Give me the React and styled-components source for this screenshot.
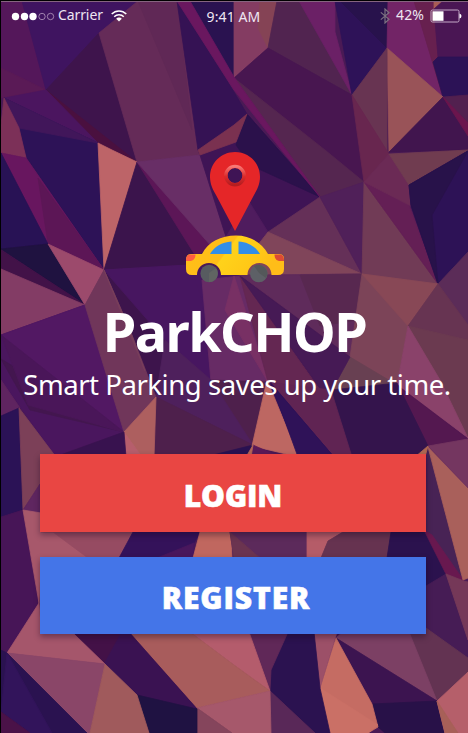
import React from 'react';
import styled, { createGlobalStyle } from 'styled-components';

const GlobalStyle = createGlobalStyle`
  *, *::before, *::after { box-sizing: border-box; }
  body { margin: 0; background: #000; }
`;

const Screen = styled.main`
  position: relative;
  isolation: isolate;
  display: flex;
  flex-direction: column;
  width: 468px;
  height: 733px;
  overflow: hidden;
  border-left: 1px solid #000;
  color: #fff;
  font-family: 'Noto Sans', 'Open Sans', sans-serif;
`;

const Backdrop = styled.svg`
  position: absolute;
  inset: 0 0 0 -1px;
  width: 468px;
  height: 733px;
  z-index: -1;
`;

const StatusBar = styled.header`
  display: grid;
  grid-template-columns: 1fr auto 1fr;
  align-items: center;
  height: 31px;
  padding: 0 6px 0 10px;
  border-top: 1px solid #000;
  box-shadow: inset 0 1px #85647f;
  font-size: 14px;
  line-height: 20px;
  color: #eee6f2;
`;

const StatusGroup = styled.div`
  display: flex;
  align-items: center;
  justify-content: ${(p) => (p.$end ? 'flex-end' : 'flex-start')};
`;

const StatusText = styled.span`
  font-size: ${(p) => p.$size || 14}px;
  letter-spacing: ${(p) => p.$track || 0}px;
  margin: ${(p) => p.$margin || 0};
`;

const Brand = styled.section`
  display: flex;
  flex-direction: column;
  align-items: center;
  padding-top: 118px;
`;

const Logo = styled.svg`
  display: block;
  width: 104px;
  height: 136px;
`;

const Title = styled.h1`
  margin: 12.500px 0 0;
  font-size: 54px;
  line-height: 66px;
  font-weight: 700;
  letter-spacing: ${(p) => p.$track}px;
  white-space: nowrap;
`;

const Tagline = styled.p`
  margin: 2px 0 0 5px;
  font-size: 27.5px;
  line-height: 38px;
  letter-spacing: ${(p) => p.$track}px;
  white-space: nowrap;
`;

const Actions = styled.nav`
  display: flex;
  flex-direction: column;
  gap: 25px;
  margin: 50.500px 42px 0 39px;
`;

const ActionButton = styled.button`
  height: 77.5px;
  padding: 6px 0 0 ${(p) => p.$shift || 0}px;
  border: 0;
  background: ${(p) => p.$color};
  box-shadow: 0 3px 6px rgba(20, 5, 30, 0.4);
  color: #fff;
  font-family: 'Open Sans', 'Noto Sans', sans-serif;
  font-size: 30px;
  line-height: 40px;
  font-weight: 800;
  letter-spacing: ${(p) => p.$track}px;
  -webkit-text-stroke: 0.6px #fff;
`;

const FACETS = [
  ['#54175a', '1,1 22,1 46,90 1,98'],
  ['#5a1a56', '1,68 46,90 1,98'],
  ['#3f1460', '22,1 138,1 99,33 46,90'],
  ['#3e144c', '99,33 46,90 98,143 137,162'],
  ['#4a103f', '46,90 98,143 137,162'],
  ['#652b58', '99,33 138,1 177,1 200,155 137,162'],
  ['#602856', '138,1 177,1 192,130'],
  ['#351254', '177,1 234,92 247,114 200,155 198,150'],
  ['#2a1250', '190,1 234,1 234,78'],
  ['#4b155f', '46,90 4,98 98,143'],
  ['#2d1257', '4,98 19,128 27,158 104,270 98,143'],
  ['#41165a', '4,98 98,143 19,128'],
  ['#7c3058', '1,125 4,98 19,128 26,158 1,153'],
  ['#68165f', '1,153 26,158 104,270 48,244'],
  ['#5c1656', '38,178 104,270 48,244'],
  ['#281255', '1,153 48,244 1,249'],
  ['#1f1240', '1,249 48,244 84,304'],
  ['#421248', '1,250 84,304 1,270'],
  ['#833c65', '1,269 85,305 1,335'],
  ['#9c4a6c', '48,244 104,270 85,305'],
  ['#bd6468', '98,143 112,150 137,162 104,270'],
  ['#3b144c', '137,162 104,270 190,265 195,255'],
  ['#5c1657', '137,162 195,255 212,247'],
  ['#682e66', '137,162 200,155 226,237 212,247'],
  ['#471660', '104,270 190,265 240,276 211,380 145,370'],
  ['#3d144c', '104,270 130,295 211,380 156,397 130,330'],
  ['#471660', '104,270 190,265 202,300 211,382 165,340'],
  ['#843c62', '234,1 277,1 268,48 234,78'],
  ['#854355', '260,1 277,1 268,48 258,28'],
  ['#512450', '277,1 299,1 352,95 268,48'],
  ['#6b2066', '299,1 335,1 335,32 352,95'],
  ['#2e1258', '335,1 388,1 387,48 352,95'],
  ['#28124c', '340,1 388,1 387,48'],
  ['#722466', '388,1 414,1 443,97 387,48'],
  ['#67204f', '414,1 434,1 438,57 433,62 443,97'],
  ['#a85d55', '434,1 443,1 434,9'],
  ['#4a1654', '443,1 468,1 468,57 438,57 434,9'],
  ['#2c1256', '438,57 468,57 468,95 443,97 433,62'],
  ['#995358', '387,48 443,97 389,152'],
  ['#683452', '387,48 387,152 352,95'],
  ['#481650', '268,48 352,95 364,182 320,197 234,78'],
  ['#552650', '234,78 325,150 364,182 320,197'],
  ['#68264f', '352,95 389,154 364,182'],
  ['#52204f', '443,97 468,95 468,135'],
  ['#41154e', '443,97 389,152 468,150 468,135'],
  ['#6b154d', '443,97 468,123 468,136'],
  ['#3f1455', '200,155 247,114 320,197 268,232 226,237'],
  ['#2b114b', '247,114 320,197 250,165 236,145'],
  ['#6a175f', '177,1 190,1 234,77 320,197 283,152 234,90'],
  ['#7a3150', '234,125 247,114 236,142 200,155 198,150'],
  ['#4f1c5e', '226,237 248,200 268,232 250,255'],
  ['#653058', '268,232 320,197 362,274'],
  ['#502059', '320,197 364,182 362,274'],
  ['#713b56', '364,182 438,284 362,274'],
  ['#641f55', '364,182 409,205 438,284'],
  ['#6b2a55', '364,182 389,154 409,185 411,206'],
  ['#703c50', '389,154 468,150 409,185'],
  ['#2d1256', '409,185 468,151 468,252 438,284 411,205'],
  ['#28124a', '409,185 468,151 432,215 438,284 411,205'],
  ['#5b2c58', '438,284 468,252 468,325 408,326'],
  ['#80455a', '268,232 362,274 240,276 250,255'],
  ['#5f2b5b', '240,275 362,274 350,357'],
  ['#582850', '300,275 362,274 358,320 320,326'],
  ['#7c4458', '362,274 438,284 408,326 397,385 331,392 350,357'],
  ['#884856', '362,274 438,284 408,326'],
  ['#684052', '350,357 397,385 331,392'],
  ['#673452', '408,326 438,284 468,325 468,370'],
  ['#6b3a50', '408,326 468,340 468,438'],
  ['#8a426a', '408,326 440,380 468,438 397,385'],
  ['#541850', '397,385 468,439 428,446'],
  ['#34144c', '331,390 397,383 428,446 420,457 352,457'],
  ['#672b65', '202,280 240,276 268,382 211,382'],
  ['#783064', '234,276 255,340 268,382 225,310'],
  ['#642752', '240,276 320,390 268,382'],
  ['#461a55', '240,276 350,357 331,392 320,388'],
  ['#4e204c', '156,397 211,380 268,382 253,445 240,457 154,457'],
  ['#4e205c', '156,397 165,340 211,380 253,445'],
  ['#4e204c', '156,397 253,445 240,457 154,457'],
  ['#291151', '205,457 253,445 247,457'],
  ['#602453', '268,382 331,390 352,457 334,457'],
  ['#2f1258', '270,382 334,457 298,457'],
  ['#bd6762', '267,380 299,457 252,446'],
  ['#2f1258', '272,385 334,457 298,457'],
  ['#5b1a58', '253,445 280,457 250,457'],
  ['#b46557', '253,445 251,457 246,457'],
  ['#4a165e', '1,335 85,305 124,432 55,456 1,380'],
  ['#43164f', '1,359 124,432 30,410'],
  ['#521863', '85,305 124,432 100,425 1,335'],
  ['#4a1659', '1,335 124,432 28,405'],
  ['#70365a', '85,305 104,270 130,330 156,397 124,432'],
  ['#783f5b', '104,270 130,330 145,371'],
  ['#ad5f5f', '156,397 154,457 126,457 124,432'],
  ['#b65e6c', '124,432 142,457 126,457'],
  ['#5f2460', '1,380 20,408 1,416'],
  ['#2b1256', '1,416 19,408 23,510 1,517'],
  ['#7c4058', '19,408 56,457 40,484 23,510'],
  ['#5f2660', '40,484 23,510 41,514'],
  ['#38124f', '55,457 124,432 126,457'],
  ['#471557', '1,517 23,510 39,603 7,653 1,648'],
  ['#a7586b', '23,510 41,513 41,532 133,532 119,558 41,560 39,603'],
  ['#964b62', '41,532 133,532 119,558 88,558 53,532'],
  ['#34125a', '133,532 200,532 194,543 193,558 119,558'],
  ['#49175d', '194,543 193,558 157,558'],
  ['#c0675f', '200,532 231,532 232,558 193,558'],
  ['#5c2a5b', '230,532 307,532 307,558 234,558'],
  ['#6b3450', '230,532 260,558 234,558'],
  ['#b55c68', '307,532 343,532 328,541 321,558 307,558'],
  ['#663350', '343,532 391,532 387,558 321,558 328,541'],
  ['#2b124e', '391,532 426,532 446,574 426,590 387,558'],
  ['#482355', '428,447 463,580 426,532'],
  ['#68184f', '424,530 432,535 464,581 446,574'],
  ['#a9605b', '428,447 468,488 468,578 463,580'],
  ['#743660', '428,446 468,439 468,488'],
  ['#b16851', '415,457 428,446 425,457'],
  ['#461c55', '446,574 468,640 468,658 426,630 426,586'],
  ['#753858', '446,574 464,581 468,582 468,640'],
  ['#633352', '409,634 426,628 468,658 468,672 437,701'],
  ['#7c4064', '336,638 345,630 409,632 437,701'],
  ['#3c1450', '336,638 437,701 372,704'],
  ['#281148', '372,704 437,701 445,733 385,733 378,727'],
  ['#b55f6a', '437,701 468,672 468,733 445,733'],
  ['#a76058', '437,701 458,733 445,733'],
  ['#c56c63', '336,638 372,704 378,727 368,733 330,733 320,688'],
  ['#ca7066', '320,688 378,725 368,733 330,733'],
  ['#9c5068', '314,632 337,632 320,688'],
  ['#2b1250', '287,632 314,632 320,688 330,733 315,733 270,690 271,670'],
  ['#602858', '249,632 288,632 271,670 270,690'],
  ['#592858', '270,691 315,733 271,733'],
  ['#b45c6c', '190,632 249,632 270,691 234,665'],
  ['#a85c5c', '129,632 190,632 234,665 270,691 197,708'],
  ['#a6586b', '197,708 270,691 271,733 232,733'],
  ['#85455c', '197,708 197,733 232,733'],
  ['#3a1252', '73,632 129,632 197,709 137,695 104,663'],
  ['#431147', '73,632 121,632 104,663'],
  ['#1f1242', '137,695 197,709 197,733 149,733'],
  ['#a5566b', '39,603 41,632 74,634 105,664 7,653'],
  ['#8a4668', '7,653 105,664 90,733 87,733'],
  ['#a05a5c', '105,664 137,695 149,733 90,733'],
  ['#2a1250', '7,653 87,733 30,733 1,712 1,650'],
  ['#32145b', '7,653 52,733 30,733 1,712'],
  ['#4a1248', '1,712 30,733 1,733'],
];

const PolygonBackdrop = () => (
  <Backdrop viewBox="0 0 468 733" aria-hidden="true">
    <rect width="468" height="733" fill="#4a1a55" />
    {FACETS.map(([color, points], i) => (
      <polygon key={i} points={points} fill={color} stroke={color} strokeWidth="0.8" />
    ))}
  </Backdrop>
);

const ParkingLogo = () => (
  <Logo viewBox="183 149 104 136" aria-label="Car below a map pin">
    <defs>
      <linearGradient id="ring" x1="0" y1="0" x2="0" y2="1">
        <stop offset="0" stopColor="#f87874" />
        <stop offset="0.55" stopColor="#dc2a2a" />
        <stop offset="1" stopColor="#b51d20" />
      </linearGradient>
      <linearGradient id="body" x1="0" y1="0" x2="1" y2="0.3">
        <stop offset="0" stopColor="#ffc01a" />
        <stop offset="0.48" stopColor="#ffbd17" />
        <stop offset="0.5" stopColor="#ffd21a" />
        <stop offset="0.8" stopColor="#ffc817" />
        <stop offset="1" stopColor="#ffbd18" />
      </linearGradient>
    </defs>
    <path
      fill="#e52628"
      fillRule="evenodd"
      d="M235 152c-14 0-25 11-25 25 0 7 3 13 6 18l19 36 19-36c3-5 6-11 6-18 0-14-11-25-25-25zm0 16a7.5 7.5 0 1 1 0 15 7.5 7.5 0 0 1 0-15z"
    />
    <circle cx="235" cy="175.6" r="9.2" fill="none" stroke="url(#ring)" strokeWidth="3.4" />
    <path
      fill="url(#body)"
      d="M186 260q0-6 5-6h11c6-12 19-18.500 34-18.500 14 0 26 7 32 18.500h11q5 0 5 5v10q0 6-6 6h-6.500c0-7-5-12-12-12s-12 5-12 12H221c0-7-5-12-12-12s-12 5-12 12h-5q-6 0-6-6z"
    />
    <path d="M210 254c4-7 12-12 21.500-12.500V254zM238.500 241.500c9.500.5 17 5 21.500 12.500h-21.500z" fill="#328ee8" />
    <path d="M190 254.500h5.500c0 4.500-3 6.500-5.500 6.500h-4c0-4 1-6.500 4-6.500z" fill="#ff5d42" />
    <path d="M274.500 254.500h5.500c3 0 4 2.500 4 6.500h-4c-3 0-5.500-2-5.500-6.500z" fill="#dc4b35" />
    <circle cx="209.200" cy="273.500" r="8.800" fill="#575b60" />
    <path d="M209 273l7-5a8.800 8.800 0 0 1-7 14z" fill="#606462" />
    <circle cx="258.800" cy="273.500" r="8.800" fill="#5d6066" />
    <path d="M259 273l-5-7a8.800 8.800 0 0 1 12 12z" fill="#54585a" />
  </Logo>
);

const SignalDots = () => (
  <svg width="44" height="9" viewBox="0 0 44 9" aria-hidden="true">
    {[4.5, 13.500, 22].map((x) => (
      <circle key={x} cx={x} cy="4.500" r="3.700" fill="#fff" />
    ))}
    {[31, 39.500].map((x) => (
      <circle key={x} cx={x} cy="4.500" r="3.200" fill="none" stroke="#b79bc0" strokeWidth="0.8" />
    ))}
  </svg>
);

const WifiIcon = () => (
  <svg width="16" height="12" viewBox="0 0 16 12" fill="none" stroke="#fff" strokeWidth="1.500" aria-hidden="true">
    <path d="M.7 4.100C4.800-.1 11.200-.1 15.300 4.100M3.200 6.700c2.700-2.700 6.900-2.700 9.600 0" />
    <path d="M5.200 8.700c1.600-1.500 4-1.500 5.600 0L8 11.600z" fill="#fff" stroke="none" />
  </svg>
);

const BluetoothIcon = () => (
  <svg width="10" height="16" viewBox="0 0 10 16" fill="none" stroke="#7c7180" strokeWidth="1.200" aria-hidden="true">
    <path d="M.8 4.400 9 11.300 5 15V1l4 3.700-8.200 6.900" />
  </svg>
);

const BatteryIcon = () => (
  <svg width="32" height="14" viewBox="0 0 32 14" aria-hidden="true">
    <rect x="1" y="1" width="28" height="12" rx="1.500" fill="none" stroke="#c4a9c7" />
    <rect x="2.500" y="2.300" width="11" height="9.500" fill="#fff" />
    <path d="M29.500 4.500q2 .5 2 2.500t-2 2.500z" fill="#fff" />
  </svg>
);

export default function App() {
  return (
    <Screen>
      <GlobalStyle />
      <PolygonBackdrop />
      <StatusBar>
        <StatusGroup>
          <SignalDots />
          <StatusText $margin="-2px 8px 0 3px" $track={-0.1}>Carrier</StatusText>
          <WifiIcon />
        </StatusGroup>
        <StatusText $margin="1px 6px 0 0" $track={0.1}>9:41 AM</StatusText>
        <StatusGroup $end>
          <BluetoothIcon />
          <StatusText $margin="-2px 6px 0" $track={0.1}>42%</StatusText>
          <BatteryIcon />
        </StatusGroup>
      </StatusBar>
      <Brand>
        <ParkingLogo />
        <Title $track={-1.5}>ParkCHOP</Title>
        <Tagline $track={-0.45}>Smart Parking saves up your time.</Tagline>
      </Brand>
      <Actions>
        <ActionButton $color="#e94643" $track={-0.1}>LOGIN</ActionButton>
        <ActionButton $color="#4475e8" $track={0.9} $shift={6}>REGISTER</ActionButton>
      </Actions>
    </Screen>
  );
}
